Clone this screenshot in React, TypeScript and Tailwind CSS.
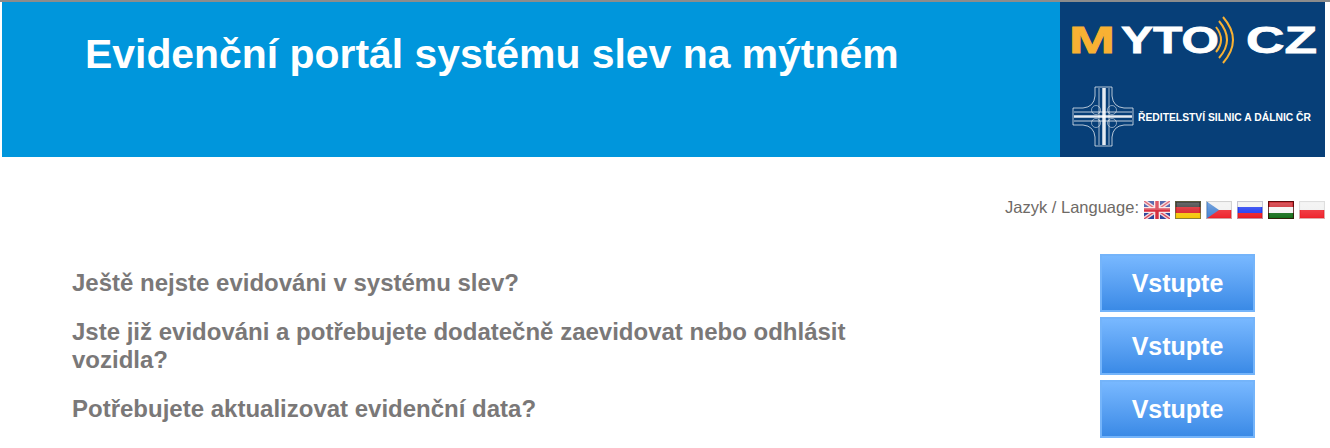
const rows = [
  "Ještě nejste evidováni v systému slev?",
  "Jste již evidováni a potřebujete dodatečně zaevidovat nebo odhlásit vozidla?",
  "Potřebujete aktualizovat evidenční data?",
];

// the small glossy flags: lighter inner area, saturated edge
function Gloss({ edge }: { edge: string }) {
  return (
    <>
      <rect x="1.5" y="1.5" width="23" height="15" fill="url(#gloss)" />
      <rect x="0.5" y="0.5" width="25" height="17" fill="none" stroke={edge} strokeOpacity="0.75" />
    </>
  );
}

function FlagGb() {
  return (
    <svg width="26" height="18" viewBox="0 0 26 18" className="block mt-[5px] blur-[0.3px]">
      <rect width="26" height="18" fill="#2f479c" />
      <path d="M0 0 26 18M26 0 0 18" stroke="#f3d5d8" strokeWidth="4" />
      <path d="M0 0 26 18M26 0 0 18" stroke="#d8485a" strokeWidth="1.3" />
      <path d="M13 0V18M0 9H26" stroke="#f5e6e8" strokeWidth="6" />
      <path d="M13 0V18M0 9H26" stroke="#d62f3f" strokeWidth="3.4" />
      <rect width="26" height="9" fill="#fff" fillOpacity="0.2" />
    </svg>
  );
}

function FlagStripes({ colors, edge }: { colors: string[]; edge: string }) {
  const h = 18 / colors.length;
  return (
    <svg width="26" height="18" viewBox="0 0 26 18" className="block mt-[5px] blur-[0.3px]">
      {colors.map((c, i) => (
        <rect key={i} x="0" y={i * h} width="26" height={h} fill={c} />
      ))}
      <Gloss edge={edge} />
    </svg>
  );
}

function FlagCz() {
  return (
    <svg width="26" height="18" viewBox="0 0 26 18" className="block mt-[5px] blur-[0.3px]">
      <rect width="26" height="9" fill="#f0f0f0" />
      <rect y="9" width="26" height="9" fill="#ee1c25" />
      <path d="M0 0 13 9 0 18Z" fill="#3f7fd0" />
      <Gloss edge="#c8c8c8" />
    </svg>
  );
}

function Logo() {
  return (
    <svg width="265" height="155" viewBox="0 0 265 155" className="block">
      <text x="9" y="51" fontFamily="Liberation Sans" fontWeight="700" fontSize="36" fill="#f8b133" stroke="#f8b133" strokeWidth="0.8" textLength="46" lengthAdjust="spacingAndGlyphs">M</text>
      <text x="61" y="51" fontFamily="Liberation Sans" fontWeight="700" fontSize="36" fill="#ffffff" stroke="#ffffff" strokeWidth="0.8" textLength="98" lengthAdjust="spacingAndGlyphs">YTO</text>
      <text x="186" y="51" fontFamily="Liberation Sans" fontWeight="700" fontSize="36" fill="#ffffff" stroke="#ffffff" strokeWidth="0.8" textLength="71" lengthAdjust="spacingAndGlyphs">CZ</text>
      <g fill="none" stroke="#f8b133" strokeWidth="2">
        <path d="M156 25Q166 38 156 50" />
        <path d="M159 19Q175 38 159 56" />
        <path d="M163 15Q183 38 163 61" />
      </g>
      <g fill="none" stroke="#ffffff">
        <path d="M35 85H52V94Q53 105 64 106H73V123H64Q53 124 52 135V144H35V135Q34 124 23 123H13V106H23Q34 105 35 94Z" strokeOpacity="0.7" />
        <circle cx="36" cy="108" r="4.5" strokeOpacity="0.5" />
        <circle cx="52" cy="108" r="4.5" strokeOpacity="0.5" />
        <circle cx="36" cy="121" r="4.5" strokeOpacity="0.5" />
        <circle cx="52" cy="121" r="4.5" strokeOpacity="0.5" />
        <path d="M39 86V143M49 86V143" strokeOpacity="0.65" />
        <path d="M14 110H72M14 119H72" strokeOpacity="0.75" />
      </g>
      <path d="M44 86V143" stroke="#ffffff" strokeWidth="3.5" strokeOpacity="0.9" />
      <path d="M14 114.5H72" stroke="#ffffff" strokeWidth="2.5" strokeOpacity="0.9" />
      <text x="78" y="119" fontFamily="Liberation Sans" fontWeight="700" fontSize="10" fill="#ffffff" textLength="173" lengthAdjust="spacingAndGlyphs">ŘEDITELSTVÍ SILNIC A DÁLNIC ČR</text>
    </svg>
  );
}

export default function App() {
  return (
    <div className="min-h-[448px] bg-white border-t-2 border-[#8c8c8c] font-['Liberation_Sans',Arial,sans-serif] overflow-hidden">
      {/* shared defs for the flag shine */}
      <svg width="0" height="0" className="absolute">
        <defs>
          <linearGradient id="gloss" x1="0" y1="0" x2="0" y2="1">
            <stop offset="0" stopColor="#fff" stopOpacity="0.3" />
            <stop offset="0.5" stopColor="#fff" stopOpacity="0.15" />
            <stop offset="1" stopColor="#fff" stopOpacity="0.05" />
          </linearGradient>
        </defs>
      </svg>

      <header className="ml-[2px] mr-[5px] h-[155px] flex bg-[#0096dc]">
        <h1 className="flex-1 pl-[83px] pt-[26px] text-[40.9px] leading-[52px] font-bold text-white">
          Evidenční portál systému slev na mýtném
        </h1>
        <div className="w-[265px] bg-[#073f78]">
          <Logo />
        </div>
      </header>

      <div className="mt-[39px] pr-[5px] h-[22px] flex justify-end items-start gap-[5px] text-[16.5px] leading-[22px] text-[#6e6a66]">
        <span>Jazyk / Language:</span>
        <FlagGb />
        <FlagStripes colors={["#2a2a2a", "#d8141c", "#f4c400"]} edge="#6b6a45" />
        <FlagCz />
        <FlagStripes colors={["#f0f0f0", "#1430f0", "#e8141c"]} edge="#b8b8c8" />
        <FlagStripes colors={["#c8141c", "#f4f4f4", "#0f6a14"]} edge="#400808" />
        <FlagStripes colors={["#f0f0f0", "#ee1c25"]} edge="#d8d8d8" />
      </div>

      <div className="mt-[36px] ml-[72px] w-[1183px] flex flex-col gap-[5px]">
        {rows.map((text) => (
          <div key={text} className="flex items-center justify-between">
            <p className="w-[800px] text-[24px] leading-[28px] font-bold text-[#7a7878]">{text}</p>
            <button className="w-[155px] h-[58px] pt-[2px] border-2 border-[#74b4fa] bg-gradient-to-b from-[#78b8ff] to-[#3a8ae6] text-white text-[25px] font-bold">
              Vstupte
            </button>
          </div>
        ))}
      </div>
    </div>
  );
}
